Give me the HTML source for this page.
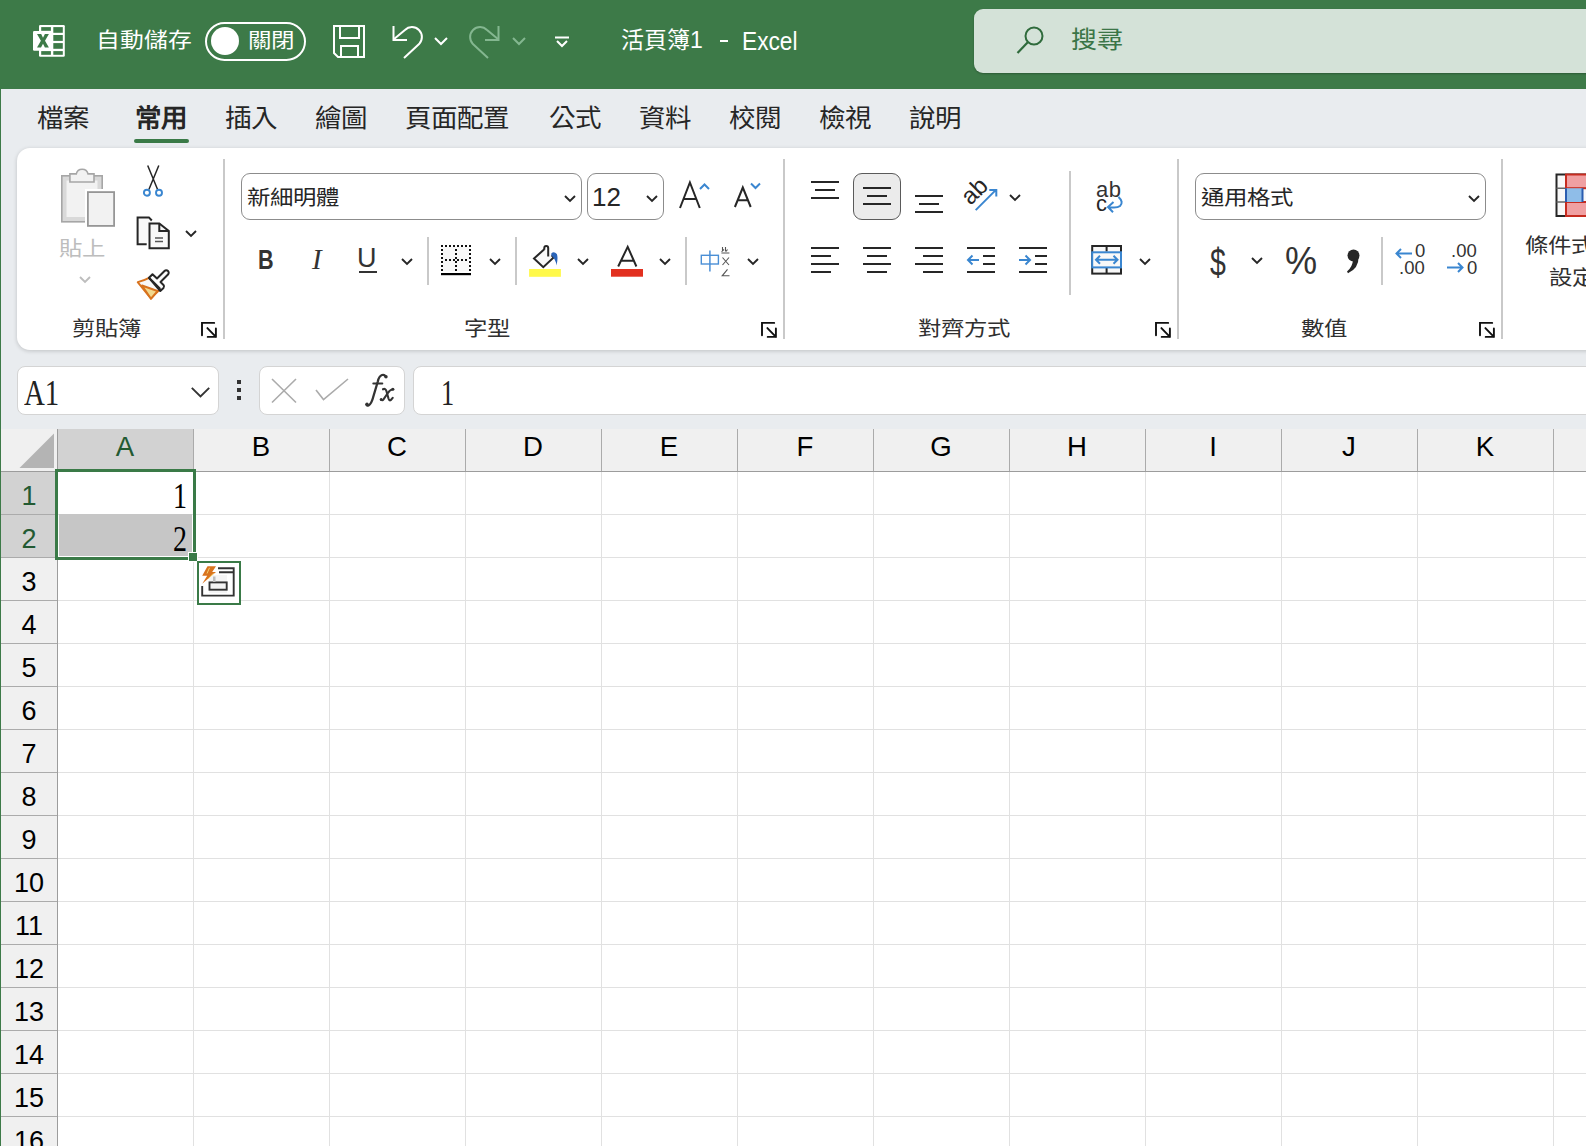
<!DOCTYPE html>
<html lang="zh-TW">
<head>
<meta charset="utf-8">
<style>
*{box-sizing:border-box;margin:0;padding:0}
html,body{width:1586px;height:1146px;overflow:hidden}
body{background:#E9ECEF;font-family:"Liberation Sans",sans-serif;position:relative;color:#222}
.a{position:absolute;white-space:nowrap}
svg.a{overflow:visible}
#title{left:0;top:0;width:1586px;height:89px;background:#3D7A48}
.wt{color:#fff}
#lb{left:0;top:89px;width:1px;height:1057px;background:#3D7A48}
.tab{top:102px;font-size:26.5px;line-height:34px;color:#262626;transform:scaleY(.95);transform-origin:0 0}
#panel{left:17px;top:148px;width:1600px;height:202px;background:#fff;border-radius:13px;box-shadow:0 1px 4px rgba(0,0,0,.18)}
.sep{background:#C9C9C9;width:2px}
.lbl{font-size:23.4px;line-height:30px;color:#303030;transform:scaleY(.88);transform-origin:0 0}
.cj{transform:scaleY(.88);transform-origin:0 0}
.box{border:1.6px solid #8C8C8C;border-radius:9px;background:#fff}
.fb{background:#fff;border:1px solid #D4D4D4;border-radius:8px}
</style>
</head>
<body>
<div id="title" class="a">
<svg class="a" style="left:28px;top:20px" width="42" height="42" viewBox="0 0 42 42">
<rect x="11" y="5" width="25.8" height="31.8" rx="1.2" fill="#fff"/>
<rect x="5" y="11" width="20" height="19.8" rx="1.2" fill="#fff"/>
<g fill="#3D7A48"><rect x="13.2" y="7.1" width="9.7" height="3.7"/><rect x="13.2" y="31.1" width="9.7" height="3.7"/>
<rect x="25.3" y="7.1" width="9.5" height="5.7"/><rect x="25.3" y="15" width="9.5" height="5.9"/><rect x="25.3" y="23.1" width="9.5" height="5.7"/><rect x="25.3" y="31.1" width="9.5" height="3.7"/>
<path d="M9 14.1H13.2L15 17.8L16.9 14.1H20.9L17 20.8L20.9 27.5H16.9L15 23.7L13 27.5H9L12.9 20.8Z"/></g>
</svg>
<div class="a wt cj" style="left:96px;top:25px;font-size:23.8px;line-height:34px">自動儲存</div>
<div class="a" style="left:205px;top:22px;width:101px;height:39px;border:2px solid #fff;border-radius:20px"></div>
<div class="a" style="left:211px;top:27px;width:28px;height:28px;border-radius:50%;background:#fff"></div>
<div class="a wt cj" style="left:248px;top:26px;font-size:23.5px;line-height:34px">關閉</div>
<svg class="a" style="left:332px;top:25px" width="34" height="34" viewBox="0 0 34 34">
<path d="M2 1H32V32H6L2 28Z M8 1V13H27V1 M9 32V21H26V32" fill="none" stroke="#fff" stroke-width="2"/>
</svg>
<svg class="a" style="left:390px;top:24px" width="34" height="36" viewBox="0 0 34 36">
<path d="M3.5 2V16H17" fill="none" stroke="#fff" stroke-width="2"/>
<path d="M3.8 15.2L14.93 5.93A10 10 0 0 1 29.07 20.07L14 34" fill="none" stroke="#fff" stroke-width="2"/>
</svg>
<svg class="a" style="left:433px;top:36px" width="16" height="12" viewBox="0 0 16 12"><path d="M2 2L8 8L14 2" fill="none" stroke="#fff" stroke-width="2"/></svg>
<svg class="a" style="left:468px;top:24px" width="34" height="36" viewBox="0 0 34 36">
<path d="M30.5 2V16H17" fill="none" stroke="#84B790" stroke-width="2"/>
<path d="M30.2 15.2L19.07 5.93A10 10 0 0 0 4.93 20.07L20 34" fill="none" stroke="#84B790" stroke-width="2"/>
</svg>
<svg class="a" style="left:511px;top:36px" width="16" height="12" viewBox="0 0 16 12"><path d="M2 2L8 8L14 2" fill="none" stroke="#84B790" stroke-width="2"/></svg>
<svg class="a" style="left:553px;top:34px" width="18" height="16" viewBox="0 0 18 16"><path d="M2 3.5H16M4 7L9 12L14 7" fill="none" stroke="#fff" stroke-width="2"/></svg>
<div class="a wt" style="left:621px;top:23px;font-size:23px;line-height:34px">活頁簿1</div><div class="a" style="left:720px;top:40px;width:8px;height:2px;background:#fff"></div><div class="a wt" style="left:742px;top:24px;font-size:25.5px;line-height:34px;transform:scaleX(.89);transform-origin:0 0">Excel</div>
<div class="a" style="left:974px;top:9px;width:640px;height:64px;background:#D4E2D8;border-radius:9px;box-shadow:0 1px 2px rgba(0,0,0,.25)"></div>
<svg class="a" style="left:1014px;top:24px" width="34" height="34" viewBox="0 0 34 34">
<circle cx="20" cy="12" r="8.5" fill="none" stroke="#2F6B3C" stroke-width="2"/>
<path d="M14 18L3.5 29" stroke="#2F6B3C" stroke-width="2.2"/>
</svg>
<div class="a cj" style="left:1071px;top:23px;font-size:26px;line-height:36px;color:#3B7547;transform:scaleY(.92)">搜尋</div>
</div>
<div id="lb" class="a"></div>
<div class="a tab" style="left:37px;">檔案</div>
<div class="a tab" style="left:135px;font-weight:bold;">常用</div>
<div class="a tab" style="left:225px;">插入</div>
<div class="a tab" style="left:315px;">繪圖</div>
<div class="a tab" style="left:405px;">頁面配置</div>
<div class="a tab" style="left:549px;">公式</div>
<div class="a tab" style="left:639px;">資料</div>
<div class="a tab" style="left:729px;">校閱</div>
<div class="a tab" style="left:819px;">檢視</div>
<div class="a tab" style="left:909px;">說明</div>
<div class="a" style="left:134px;top:139px;width:55px;height:4px;border-radius:2px;background:#3A7A47"></div>
<div id="panel" class="a"></div>
<svg class="a" style="left:55px;top:160px" width="70" height="70" viewBox="0 0 70 70">
<rect x="6.8" y="15.8" width="40.4" height="46" fill="#D9D9D9" stroke="#A6A6A6" stroke-width="1.6"/>
<rect x="11.5" y="20.5" width="31" height="36.5" fill="#F2F2F2"/>
<path d="M14.9 22V13.9H21.3A6 6 0 0 1 33 13.9H39V22Z" fill="#F2F2F2" stroke="#A6A6A6" stroke-width="1.6"/>
<rect x="30" y="29" width="32" height="40" fill="#fff"/>
<rect x="32.9" y="32.1" width="26.2" height="33.8" fill="#F2F2F2" stroke="#969696" stroke-width="1.8"/>
</svg>
<div class="a lbl" style="left:59px;top:236px;color:#BDBDBD">貼上</div>
<svg class="a" style="left:79px;top:276px" width="12" height="7" viewBox="0 0 12 7"><path d="M1 1L6.0 6L11 1" fill="none" stroke="#BDBDBD" stroke-width="1.9"/></svg>
<svg class="a" style="left:140px;top:163px" width="26" height="36" viewBox="0 0 26 36">
<path d="M7.7 2.5L17.6 26.5M18.8 2.5L8.9 26.5" fill="none" stroke="#262626" stroke-width="1.5"/>
<circle cx="6.9" cy="29.7" r="3" fill="#fff" stroke="#3A86D0" stroke-width="1.9"/>
<circle cx="19" cy="29.7" r="3" fill="#fff" stroke="#3A86D0" stroke-width="1.9"/>
</svg>
<svg class="a" style="left:135px;top:215px" width="36" height="36" viewBox="0 0 36 36">
<path d="M11.7 29.3H2.6V2.4H13.9L16.8 5.5" fill="#F8F8F8" stroke="#262626" stroke-width="2"/>
<path d="M14.5 8.5H24.3L33.8 15.9V33.2H14.5Z" fill="#F8F8F8" stroke="#262626" stroke-width="2"/>
<path d="M24.3 8.5V15.9H33.8" fill="none" stroke="#262626" stroke-width="2"/>
<path d="M20 22.9H28M20 26.6H28" stroke="#555" stroke-width="1.5"/>
</svg>
<svg class="a" style="left:185px;top:230px" width="12" height="7" viewBox="0 0 12 7"><path d="M1 1L6.0 6L11 1" fill="none" stroke="#262626" stroke-width="1.9"/></svg>
<svg class="a" style="left:136px;top:267px" width="36" height="36" viewBox="0 0 36 36">
<path d="M1.7 15.2Q8 13.5 13 10.8L24.3 22Q19 27 15 31.7Z" fill="#F8F8F8" stroke="#D8731E" stroke-width="1.9" stroke-linejoin="round"/>
<path d="M6 18.5L21.5 24L15 31.7Z" fill="#F2D98E" stroke="#D8731E" stroke-width="1.9" stroke-linejoin="round"/>
<path d="M13 10.8L16.5 7.3L21 11.5L28.5 4A2.2 2.2 0 0 1 32 7.5L24.5 15L27.5 18Q28.8 19.5 27.5 21L24.3 24Z" fill="#FBFBFB" stroke="#262626" stroke-width="2" stroke-linejoin="round"/>
<path d="M13 10.8L24.3 22" fill="none" stroke="#262626" stroke-width="2"/>
</svg>
<div class="a lbl" style="left:72px;top:316px">剪貼簿</div>
<svg class="a" style="left:201px;top:322px" width="16" height="16" viewBox="0 0 16 16"><path d="M1 13.2V0.9H13.2M6.4 6.1L14.9 14.9M14.9 6.4V14.9H6.7" fill="none" stroke="#111" stroke-width="1.9" stroke-linecap="round"/></svg>
<div class="a sep" style="left:223px;top:159px;height:180px"></div>
<div class="a box" style="left:241px;top:173px;width:341px;height:47px"></div>
<div class="a cj" style="left:247px;top:185px;font-size:23.4px;line-height:30px;color:#262626">新細明體</div>
<svg class="a" style="left:564px;top:195px" width="12" height="7" viewBox="0 0 12 7"><path d="M1 1L6.0 6L11 1" fill="none" stroke="#262626" stroke-width="1.9"/></svg>
<div class="a box" style="left:587px;top:173px;width:77px;height:47px"></div>
<div class="a" style="left:592px;top:182px;font-size:26px;line-height:30px;color:#262626">12</div>
<svg class="a" style="left:646px;top:195px" width="12" height="7" viewBox="0 0 12 7"><path d="M1 1L6.0 6L11 1" fill="none" stroke="#262626" stroke-width="1.9"/></svg>
<svg class="a" style="left:677px;top:180px" width="26" height="30" viewBox="0 0 26 30"><path d="M3 28L12.9 2.5L22.8 28M6.7 19H19.1" fill="none" stroke="#262626" stroke-width="2"/></svg>
<svg class="a" style="left:699px;top:183px" width="11" height="7" viewBox="0 0 11 7"><path d="M1 6L5.5 1.5L10 6" fill="none" stroke="#3A86D0" stroke-width="2"/></svg>
<svg class="a" style="left:732px;top:185px" width="22" height="24" viewBox="0 0 22 24"><path d="M2.9 22L10.8 2.5L18.7 22M5.8 15.3H15.8" fill="none" stroke="#262626" stroke-width="2"/></svg>
<svg class="a" style="left:750px;top:182px" width="11" height="7" viewBox="0 0 11 7"><path d="M1 1.5L5.5 6L10 1.5" fill="none" stroke="#3A86D0" stroke-width="2"/></svg>
<div class="a" style="left:258px;top:245px;font-size:27px;line-height:30px;font-weight:bold;color:#333;transform:scaleX(.8);transform-origin:0 0">B</div>
<div class="a" style="left:312px;top:244px;font-size:29px;line-height:30px;font-style:italic;font-family:'Liberation Serif';color:#333">I</div>
<div class="a" style="left:357px;top:243px;font-size:27px;line-height:30px;color:#333">U</div>
<div class="a" style="left:359px;top:271px;width:18px;height:2px;background:#333"></div>
<svg class="a" style="left:401px;top:258px" width="12" height="7" viewBox="0 0 12 7"><path d="M1 1L6.0 6L11 1" fill="none" stroke="#262626" stroke-width="1.9"/></svg>
<div class="a sep" style="left:427px;top:237px;height:48px"></div>
<svg class="a" style="left:438px;top:242px" width="36" height="36" viewBox="0 0 36 36"><rect x="5" y="5" width="26" height="24" fill="#F8F8F8"/><g fill="#111"><rect x="3" y="3" width="2" height="2"/><rect x="3" y="7" width="2" height="2"/><rect x="3" y="11" width="2" height="2"/><rect x="3" y="15" width="2" height="2"/><rect x="3" y="19" width="2" height="2"/><rect x="3" y="23" width="2" height="2"/><rect x="3" y="27" width="2" height="2"/><rect x="7" y="3" width="2" height="2"/><rect x="7" y="17" width="2" height="2"/><rect x="11" y="3" width="2" height="2"/><rect x="11" y="17" width="2" height="2"/><rect x="15" y="3" width="2" height="2"/><rect x="15" y="17" width="2" height="2"/><rect x="17" y="7" width="2" height="2"/><rect x="17" y="11" width="2" height="2"/><rect x="17" y="15" width="2" height="2"/><rect x="17" y="19" width="2" height="2"/><rect x="17" y="23" width="2" height="2"/><rect x="17" y="27" width="2" height="2"/><rect x="19" y="3" width="2" height="2"/><rect x="19" y="17" width="2" height="2"/><rect x="23" y="3" width="2" height="2"/><rect x="23" y="17" width="2" height="2"/><rect x="27" y="3" width="2" height="2"/><rect x="27" y="17" width="2" height="2"/><rect x="31" y="3" width="2" height="2"/><rect x="31" y="7" width="2" height="2"/><rect x="31" y="11" width="2" height="2"/><rect x="31" y="15" width="2" height="2"/><rect x="31" y="19" width="2" height="2"/><rect x="31" y="23" width="2" height="2"/><rect x="31" y="27" width="2" height="2"/></g><rect x="3" y="31" width="30" height="2.2" fill="#000"/></svg>
<svg class="a" style="left:489px;top:258px" width="12" height="7" viewBox="0 0 12 7"><path d="M1 1L6.0 6L11 1" fill="none" stroke="#262626" stroke-width="1.9"/></svg>
<div class="a sep" style="left:515px;top:237px;height:48px"></div>
<svg class="a" style="left:526px;top:240px" width="40" height="40" viewBox="0 0 40 40">
<path d="M18.3 9.3L8 18.5L17.3 27.2L27.6 17.4L22 12Z" fill="#F8F8F8"/>
<path d="M18.3 9.3L8 18.5L17.3 27.2L27.6 17.4L25.6 15.3" fill="none" stroke="#262626" stroke-width="2"/>
<path d="M18.3 9.8V7.9A1.95 1.95 0 0 1 22.2 7.9V16.6" fill="none" stroke="#262626" stroke-width="2"/>
<path d="M25.3 13.4Q28 11 30.8 14Q32.3 17 30.6 25.5Q29.8 19.5 25.3 15.2Z" fill="#2A64B8"/>
<rect x="3.1" y="29" width="31.8" height="7.8" fill="#FFF94A"/>
</svg>
<svg class="a" style="left:577px;top:258px" width="12" height="7" viewBox="0 0 12 7"><path d="M1 1L6.0 6L11 1" fill="none" stroke="#262626" stroke-width="1.9"/></svg>
<svg class="a" style="left:610px;top:240px" width="34" height="40" viewBox="0 0 34 40"><path d="M8.2 26.5L17.7 6.8L26.4 26.5M11.3 20.7H23.7" fill="none" stroke="#262626" stroke-width="2"/><rect x="1" y="29" width="32" height="7.7" fill="#E2301F"/></svg>
<svg class="a" style="left:659px;top:258px" width="12" height="7" viewBox="0 0 12 7"><path d="M1 1L6.0 6L11 1" fill="none" stroke="#262626" stroke-width="1.9"/></svg>
<div class="a sep" style="left:685px;top:237px;height:48px"></div>
<svg class="a" style="left:698px;top:244px" width="36" height="36" viewBox="0 0 36 36">
<rect x="3.3" y="11.3" width="17.1" height="8.7" fill="none" stroke="#4A8FD6" stroke-width="1.4"/>
<path d="M11.9 6.5V27.4" stroke="#4A8FD6" stroke-width="1.5"/>
<path d="M24.5 3V7.5M27.5 3V7.5M23.5 7.5L26 5.5M29.5 5.5L28 7.5M23.4 9H31.4" fill="none" stroke="#555" stroke-width="1.1"/>
<path d="M24.5 13.5L31 21M31 13.5L24.5 21" fill="none" stroke="#555" stroke-width="1.1"/>
<path d="M29.5 25.3L24.2 31.8H31.5" fill="none" stroke="#555" stroke-width="1.1"/>
</svg>
<svg class="a" style="left:747px;top:258px" width="12" height="7" viewBox="0 0 12 7"><path d="M1 1L6.0 6L11 1" fill="none" stroke="#262626" stroke-width="1.9"/></svg>
<div class="a lbl" style="left:464px;top:316px">字型</div>
<svg class="a" style="left:761px;top:322px" width="16" height="16" viewBox="0 0 16 16"><path d="M1 13.2V0.9H13.2M6.4 6.1L14.9 14.9M14.9 6.4V14.9H6.7" fill="none" stroke="#111" stroke-width="1.9" stroke-linecap="round"/></svg>
<div class="a sep" style="left:783px;top:159px;height:180px"></div>
<div class="a" style="left:811px;top:181px;width:28px;height:2px;background:#262626"></div>
<div class="a" style="left:815px;top:189px;width:20px;height:2px;background:#262626"></div>
<div class="a" style="left:811px;top:197px;width:28px;height:2px;background:#262626"></div>
<div class="a" style="left:853px;top:173px;width:48px;height:47px;border:1.6px solid #5A5A5A;border-radius:9px;background:#EBEBEB"></div>
<div class="a" style="left:863px;top:187px;width:28px;height:2px;background:#262626"></div>
<div class="a" style="left:867px;top:195px;width:20px;height:2px;background:#262626"></div>
<div class="a" style="left:863px;top:203px;width:28px;height:2px;background:#262626"></div>
<div class="a" style="left:915px;top:195px;width:28px;height:2px;background:#262626"></div>
<div class="a" style="left:919px;top:203px;width:20px;height:2px;background:#262626"></div>
<div class="a" style="left:915px;top:211px;width:28px;height:2px;background:#262626"></div>
<div class="a" style="left:961px;top:179px;font-size:24px;line-height:24px;color:#262626;transform:rotate(-45deg);transform-origin:50% 50%">ab</div>
<svg class="a" style="left:970px;top:184px" width="32" height="32" viewBox="0 0 32 32"><path d="M5.7 26.1L26.2 5.6M19.3 5.9H26.3V12.5" fill="none" stroke="#3A86D0" stroke-width="2"/></svg>
<svg class="a" style="left:1009px;top:194px" width="12" height="7" viewBox="0 0 12 7"><path d="M1 1L6.0 6L11 1" fill="none" stroke="#262626" stroke-width="1.9"/></svg>
<div class="a" style="left:811px;top:247px;width:28px;height:2px;background:#262626"></div>
<div class="a" style="left:811px;top:255px;width:20px;height:2px;background:#262626"></div>
<div class="a" style="left:811px;top:263px;width:28px;height:2px;background:#262626"></div>
<div class="a" style="left:811px;top:271px;width:20px;height:2px;background:#262626"></div>
<div class="a" style="left:863px;top:247px;width:28px;height:2px;background:#262626"></div>
<div class="a" style="left:867px;top:255px;width:20px;height:2px;background:#262626"></div>
<div class="a" style="left:863px;top:263px;width:28px;height:2px;background:#262626"></div>
<div class="a" style="left:867px;top:271px;width:20px;height:2px;background:#262626"></div>
<div class="a" style="left:915px;top:247px;width:28px;height:2px;background:#262626"></div>
<div class="a" style="left:923px;top:255px;width:20px;height:2px;background:#262626"></div>
<div class="a" style="left:915px;top:263px;width:28px;height:2px;background:#262626"></div>
<div class="a" style="left:923px;top:271px;width:20px;height:2px;background:#262626"></div>
<div class="a" style="left:967px;top:247px;width:28px;height:2px;background:#262626"></div>
<div class="a" style="left:983px;top:255px;width:12px;height:2px;background:#262626"></div>
<div class="a" style="left:983px;top:263px;width:12px;height:2px;background:#262626"></div>
<div class="a" style="left:967px;top:271px;width:28px;height:2px;background:#262626"></div>
<div class="a" style="left:1019px;top:247px;width:28px;height:2px;background:#262626"></div>
<div class="a" style="left:1035px;top:255px;width:12px;height:2px;background:#262626"></div>
<div class="a" style="left:1035px;top:263px;width:12px;height:2px;background:#262626"></div>
<div class="a" style="left:1019px;top:271px;width:28px;height:2px;background:#262626"></div>
<svg class="a" style="left:964px;top:252px" width="18" height="16" viewBox="0 0 18 16"><path d="M15 8H4M8.5 3.5L4 8L8.5 12.5" fill="none" stroke="#3A86D0" stroke-width="2"/></svg>
<svg class="a" style="left:1017px;top:252px" width="18" height="16" viewBox="0 0 18 16"><path d="M2 8H13M8.5 3.5L13 8L8.5 12.5" fill="none" stroke="#3A86D0" stroke-width="2"/></svg>
<div class="a sep" style="left:1069px;top:171px;height:124px"></div>
<div class="a" style="left:1096px;top:179px;font-size:22px;line-height:22px;color:#333;letter-spacing:.5px">ab</div>
<div class="a" style="left:1096px;top:193px;font-size:22px;line-height:22px;color:#262626">c</div>
<svg class="a" style="left:1104px;top:194px" width="22" height="22" viewBox="0 0 22 22"><path d="M14.5 3Q20 8 16 12Q13 14.5 4.5 13M9.5 8L4 13L9 18.2" fill="none" stroke="#3A86D0" stroke-width="2"/></svg>
<svg class="a" style="left:1088px;top:242px" width="36" height="36" viewBox="0 0 36 36">
<rect x="4.2" y="4" width="28.8" height="27.6" fill="#F8F8F8" stroke="#262626" stroke-width="2"/>
<path d="M18.6 4V9.5M18.6 25.5V31.6" stroke="#262626" stroke-width="2"/>
<rect x="4.2" y="10.3" width="28.8" height="15.1" fill="#F8F8F8" stroke="#3A86D0" stroke-width="2"/>
<path d="M8 17.8H29.5M12 13.8L8 17.8L12 21.8M25.5 13.8L29.5 17.8L25.5 21.8" fill="none" stroke="#3A86D0" stroke-width="2"/>
</svg>
<svg class="a" style="left:1139px;top:258px" width="12" height="7" viewBox="0 0 12 7"><path d="M1 1L6.0 6L11 1" fill="none" stroke="#262626" stroke-width="1.9"/></svg>
<div class="a lbl" style="left:918px;top:316px">對齊方式</div>
<svg class="a" style="left:1155px;top:322px" width="16" height="16" viewBox="0 0 16 16"><path d="M1 13.2V0.9H13.2M6.4 6.1L14.9 14.9M14.9 6.4V14.9H6.7" fill="none" stroke="#111" stroke-width="1.9" stroke-linecap="round"/></svg>
<div class="a sep" style="left:1177px;top:159px;height:180px"></div>
<div class="a box" style="left:1195px;top:173px;width:291px;height:47px"></div>
<div class="a cj" style="left:1201px;top:185px;font-size:23.4px;line-height:30px;color:#262626">通用格式</div>
<svg class="a" style="left:1468px;top:195px" width="12" height="7" viewBox="0 0 12 7"><path d="M1 1L6.0 6L11 1" fill="none" stroke="#262626" stroke-width="1.9"/></svg>
<div class="a" style="left:1210px;top:243px;font-size:38px;line-height:40px;color:#333;transform:scaleX(.75);transform-origin:0 0">$</div>
<svg class="a" style="left:1251px;top:257px" width="12" height="7" viewBox="0 0 12 7"><path d="M1 1L6.0 6L11 1" fill="none" stroke="#262626" stroke-width="1.9"/></svg>
<div class="a" style="left:1285px;top:242px;font-size:38px;line-height:38px;color:#333;transform:scaleX(.95);transform-origin:0 0">%</div>
<svg class="a" style="left:1342px;top:246px" width="24" height="30" viewBox="0 0 24 30"><circle cx="11.5" cy="9.5" r="6" fill="#262626"/><path d="M16.5 11Q17 22 6 27.3L5 25.5Q10.5 21 11 14Z" fill="#262626"/></svg>
<div class="a sep" style="left:1381px;top:237px;height:48px"></div>
<div class="a" style="left:1415px;top:240px;font-size:18.5px;line-height:22px;color:#333">0</div>
<div class="a" style="left:1399px;top:257px;font-size:18.5px;line-height:22px;color:#333">.00</div>
<svg class="a" style="left:1393px;top:246px" width="22" height="16" viewBox="0 0 22 16"><path d="M19 7.5H3.5M8 3L3.5 7.5L8 12" fill="none" stroke="#3A86D0" stroke-width="2"/></svg>
<div class="a" style="left:1451px;top:240px;font-size:18.5px;line-height:22px;color:#333">.00</div>
<div class="a" style="left:1467px;top:257px;font-size:18.5px;line-height:22px;color:#333">0</div>
<svg class="a" style="left:1445px;top:260px" width="22" height="16" viewBox="0 0 22 16"><path d="M2 7.5H17.5M13 3L17.5 7.5L13 12" fill="none" stroke="#3A86D0" stroke-width="2"/></svg>
<div class="a lbl" style="left:1301px;top:316px">數值</div>
<svg class="a" style="left:1479px;top:322px" width="16" height="16" viewBox="0 0 16 16"><path d="M1 13.2V0.9H13.2M6.4 6.1L14.9 14.9M14.9 6.4V14.9H6.7" fill="none" stroke="#111" stroke-width="1.9" stroke-linecap="round"/></svg>
<div class="a sep" style="left:1501px;top:159px;height:180px"></div>
<svg class="a" style="left:1555px;top:173px" width="40" height="44" viewBox="0 0 40 44">
<rect x="1.5" y="1.5" width="40" height="41.5" fill="#F8F8F8" stroke="#262626" stroke-width="2"/>
<path d="M1.5 15.2H11M1.5 29H11" stroke="#666" stroke-width="1.5"/>
<rect x="11" y="1.5" width="34" height="13.7" fill="#F0A0A2" stroke="#C62B1F" stroke-width="2"/>
<rect x="11" y="29" width="34" height="14" fill="#F0A0A2" stroke="#C62B1F" stroke-width="2"/>
<rect x="11" y="15.2" width="16.5" height="13.8" fill="#8FBDE8"/>
<path d="M11 15.2V29M27.5 15.2V29" stroke="#2A5DB0" stroke-width="2"/>
</svg>
<div class="a cj" style="left:1525px;top:233px;font-size:23.4px;line-height:30px;color:#303030">條件式</div>
<div class="a cj" style="left:1549px;top:265px;font-size:23.4px;line-height:30px;color:#303030">設定</div>
<div class="a fb" style="left:17px;top:366px;width:202px;height:49px"></div>
<div class="a" style="left:24px;top:373px;font-family:'Liberation Serif',serif;font-size:36px;line-height:40px;color:#222;transform:scaleX(.8);transform-origin:0 0">A1</div>
<svg class="a" style="left:189px;top:385px" width="23" height="15" viewBox="0 0 23 15"><path d="M2.8 2.8L11.5 11.5L20.2 2.8" fill="none" stroke="#333" stroke-width="1.9"/></svg>
<div class="a" style="left:237px;top:380px;width:4px;height:4px;background:#333"></div>
<div class="a" style="left:237px;top:388px;width:4px;height:4px;background:#333"></div>
<div class="a" style="left:237px;top:396px;width:4px;height:4px;background:#333"></div>
<div class="a fb" style="left:259px;top:366px;width:146px;height:49px"></div>
<svg class="a" style="left:270px;top:377px" width="28" height="28" viewBox="0 0 28 28"><path d="M2 2L26 25.5M26 2L2 25.5" fill="none" stroke="#ABABAB" stroke-width="1.6"/></svg>
<svg class="a" style="left:314px;top:377px" width="36" height="26" viewBox="0 0 36 26"><path d="M2 13L9.5 22.5L34 2" fill="none" stroke="#ABABAB" stroke-width="1.6"/></svg>
<svg class="a" style="left:355px;top:365px" width="50" height="50" viewBox="0 0 50 50">
<path d="M30.5 11.5Q29.5 9.3 27 10Q24 11 22.8 16.5L18.5 31Q16.5 39 13.5 40.5Q11.8 41 11.6 39.5" fill="none" stroke="#333" stroke-width="2.3" stroke-linecap="round"/>
<path d="M18.3 18.4H27.3" fill="none" stroke="#333" stroke-width="2" stroke-linecap="round"/>
<circle cx="31" cy="11.8" r="1.7" fill="#333"/><circle cx="12" cy="39.2" r="1.7" fill="#333"/>
<path d="M28 24.3Q30.5 23 31.4 26L33.5 33.5Q34.3 36 35.7 35.2L37.7 32.8" fill="none" stroke="#333" stroke-width="2.1" stroke-linecap="round"/>
<path d="M37.8 24.2Q35 24.5 32.5 28.5L28.5 34.3Q27.2 36 26.3 34.6" fill="none" stroke="#333" stroke-width="2.1" stroke-linecap="round"/>
<circle cx="37.9" cy="24.3" r="1.5" fill="#333"/><circle cx="26.2" cy="34.4" r="1.5" fill="#333"/>
</svg>
<div class="a fb" style="left:413px;top:366px;width:1200px;height:49px"></div>
<div class="a" style="left:440.5px;top:374px;font-family:'Liberation Serif',serif;font-size:35px;line-height:40px;color:#222;transform:scaleX(.75);transform-origin:0 0">1</div>
<div class="a" style="left:1px;top:429px;width:1585px;height:717px;background:#fff"></div>
<div class="a" style="left:1px;top:429px;width:1585px;height:42px;background:#F0F0F0"></div>
<div class="a" style="left:1px;top:471px;width:56px;height:675px;background:#F0F0F0"></div>
<div class="a" style="left:57px;top:429px;width:136px;height:42px;background:#D2D2D2"></div>
<div class="a" style="left:1px;top:471px;width:56px;height:86px;background:#D2D2D2"></div>
<svg class="a" style="left:0;top:429px" width="57" height="42"><path d="M54 4.5V39H19.5Z" fill="#B4B4B4"/></svg>
<div class="a" style="left:193px;top:471px;width:1px;height:675px;background:#E1E1E1"></div>
<div class="a" style="left:193px;top:429px;width:1px;height:42px;background:#ABABAB"></div>
<div class="a" style="left:329px;top:471px;width:1px;height:675px;background:#E1E1E1"></div>
<div class="a" style="left:329px;top:429px;width:1px;height:42px;background:#ABABAB"></div>
<div class="a" style="left:465px;top:471px;width:1px;height:675px;background:#E1E1E1"></div>
<div class="a" style="left:465px;top:429px;width:1px;height:42px;background:#ABABAB"></div>
<div class="a" style="left:601px;top:471px;width:1px;height:675px;background:#E1E1E1"></div>
<div class="a" style="left:601px;top:429px;width:1px;height:42px;background:#ABABAB"></div>
<div class="a" style="left:737px;top:471px;width:1px;height:675px;background:#E1E1E1"></div>
<div class="a" style="left:737px;top:429px;width:1px;height:42px;background:#ABABAB"></div>
<div class="a" style="left:873px;top:471px;width:1px;height:675px;background:#E1E1E1"></div>
<div class="a" style="left:873px;top:429px;width:1px;height:42px;background:#ABABAB"></div>
<div class="a" style="left:1009px;top:471px;width:1px;height:675px;background:#E1E1E1"></div>
<div class="a" style="left:1009px;top:429px;width:1px;height:42px;background:#ABABAB"></div>
<div class="a" style="left:1145px;top:471px;width:1px;height:675px;background:#E1E1E1"></div>
<div class="a" style="left:1145px;top:429px;width:1px;height:42px;background:#ABABAB"></div>
<div class="a" style="left:1281px;top:471px;width:1px;height:675px;background:#E1E1E1"></div>
<div class="a" style="left:1281px;top:429px;width:1px;height:42px;background:#ABABAB"></div>
<div class="a" style="left:1417px;top:471px;width:1px;height:675px;background:#E1E1E1"></div>
<div class="a" style="left:1417px;top:429px;width:1px;height:42px;background:#ABABAB"></div>
<div class="a" style="left:1553px;top:471px;width:1px;height:675px;background:#E1E1E1"></div>
<div class="a" style="left:1553px;top:429px;width:1px;height:42px;background:#ABABAB"></div>
<div class="a" style="left:1689px;top:471px;width:1px;height:675px;background:#E1E1E1"></div>
<div class="a" style="left:1689px;top:429px;width:1px;height:42px;background:#ABABAB"></div>
<div class="a" style="left:57px;top:514px;width:1529px;height:1px;background:#E1E1E1"></div>
<div class="a" style="left:1px;top:514px;width:56px;height:1px;background:#ABABAB"></div>
<div class="a" style="left:57px;top:557px;width:1529px;height:1px;background:#E1E1E1"></div>
<div class="a" style="left:1px;top:557px;width:56px;height:1px;background:#ABABAB"></div>
<div class="a" style="left:57px;top:600px;width:1529px;height:1px;background:#E1E1E1"></div>
<div class="a" style="left:1px;top:600px;width:56px;height:1px;background:#ABABAB"></div>
<div class="a" style="left:57px;top:643px;width:1529px;height:1px;background:#E1E1E1"></div>
<div class="a" style="left:1px;top:643px;width:56px;height:1px;background:#ABABAB"></div>
<div class="a" style="left:57px;top:686px;width:1529px;height:1px;background:#E1E1E1"></div>
<div class="a" style="left:1px;top:686px;width:56px;height:1px;background:#ABABAB"></div>
<div class="a" style="left:57px;top:729px;width:1529px;height:1px;background:#E1E1E1"></div>
<div class="a" style="left:1px;top:729px;width:56px;height:1px;background:#ABABAB"></div>
<div class="a" style="left:57px;top:772px;width:1529px;height:1px;background:#E1E1E1"></div>
<div class="a" style="left:1px;top:772px;width:56px;height:1px;background:#ABABAB"></div>
<div class="a" style="left:57px;top:815px;width:1529px;height:1px;background:#E1E1E1"></div>
<div class="a" style="left:1px;top:815px;width:56px;height:1px;background:#ABABAB"></div>
<div class="a" style="left:57px;top:858px;width:1529px;height:1px;background:#E1E1E1"></div>
<div class="a" style="left:1px;top:858px;width:56px;height:1px;background:#ABABAB"></div>
<div class="a" style="left:57px;top:901px;width:1529px;height:1px;background:#E1E1E1"></div>
<div class="a" style="left:1px;top:901px;width:56px;height:1px;background:#ABABAB"></div>
<div class="a" style="left:57px;top:944px;width:1529px;height:1px;background:#E1E1E1"></div>
<div class="a" style="left:1px;top:944px;width:56px;height:1px;background:#ABABAB"></div>
<div class="a" style="left:57px;top:987px;width:1529px;height:1px;background:#E1E1E1"></div>
<div class="a" style="left:1px;top:987px;width:56px;height:1px;background:#ABABAB"></div>
<div class="a" style="left:57px;top:1030px;width:1529px;height:1px;background:#E1E1E1"></div>
<div class="a" style="left:1px;top:1030px;width:56px;height:1px;background:#ABABAB"></div>
<div class="a" style="left:57px;top:1073px;width:1529px;height:1px;background:#E1E1E1"></div>
<div class="a" style="left:1px;top:1073px;width:56px;height:1px;background:#ABABAB"></div>
<div class="a" style="left:57px;top:1116px;width:1529px;height:1px;background:#E1E1E1"></div>
<div class="a" style="left:1px;top:1116px;width:56px;height:1px;background:#ABABAB"></div>
<div class="a" style="left:57px;top:1159px;width:1529px;height:1px;background:#E1E1E1"></div>
<div class="a" style="left:1px;top:1159px;width:56px;height:1px;background:#ABABAB"></div>
<div class="a" style="left:57px;top:429px;width:1px;height:717px;background:#9C9C9C"></div>
<div class="a" style="left:1px;top:471px;width:1585px;height:1px;background:#9C9C9C"></div>
<div class="a" style="left:57px;top:428.5px;width:136px;text-align:center;font-size:27.6px;line-height:36px;color:#235A32">A</div>
<div class="a" style="left:193px;top:428.5px;width:136px;text-align:center;font-size:27.6px;line-height:36px;color:#000">B</div>
<div class="a" style="left:329px;top:428.5px;width:136px;text-align:center;font-size:27.6px;line-height:36px;color:#000">C</div>
<div class="a" style="left:465px;top:428.5px;width:136px;text-align:center;font-size:27.6px;line-height:36px;color:#000">D</div>
<div class="a" style="left:601px;top:428.5px;width:136px;text-align:center;font-size:27.6px;line-height:36px;color:#000">E</div>
<div class="a" style="left:737px;top:428.5px;width:136px;text-align:center;font-size:27.6px;line-height:36px;color:#000">F</div>
<div class="a" style="left:873px;top:428.5px;width:136px;text-align:center;font-size:27.6px;line-height:36px;color:#000">G</div>
<div class="a" style="left:1009px;top:428.5px;width:136px;text-align:center;font-size:27.6px;line-height:36px;color:#000">H</div>
<div class="a" style="left:1145px;top:428.5px;width:136px;text-align:center;font-size:27.6px;line-height:36px;color:#000">I</div>
<div class="a" style="left:1281px;top:428.5px;width:136px;text-align:center;font-size:27.6px;line-height:36px;color:#000">J</div>
<div class="a" style="left:1417px;top:428.5px;width:136px;text-align:center;font-size:27.6px;line-height:36px;color:#000">K</div>
<div class="a" style="left:1553px;top:428.5px;width:136px;text-align:center;font-size:27.6px;line-height:36px;color:#000">L</div>
<div class="a" style="left:1px;top:478px;width:56px;text-align:center;font-size:27px;line-height:36px;color:#235A32">1</div>
<div class="a" style="left:1px;top:521px;width:56px;text-align:center;font-size:27px;line-height:36px;color:#235A32">2</div>
<div class="a" style="left:1px;top:564px;width:56px;text-align:center;font-size:27px;line-height:36px;color:#000">3</div>
<div class="a" style="left:1px;top:607px;width:56px;text-align:center;font-size:27px;line-height:36px;color:#000">4</div>
<div class="a" style="left:1px;top:650px;width:56px;text-align:center;font-size:27px;line-height:36px;color:#000">5</div>
<div class="a" style="left:1px;top:693px;width:56px;text-align:center;font-size:27px;line-height:36px;color:#000">6</div>
<div class="a" style="left:1px;top:736px;width:56px;text-align:center;font-size:27px;line-height:36px;color:#000">7</div>
<div class="a" style="left:1px;top:779px;width:56px;text-align:center;font-size:27px;line-height:36px;color:#000">8</div>
<div class="a" style="left:1px;top:822px;width:56px;text-align:center;font-size:27px;line-height:36px;color:#000">9</div>
<div class="a" style="left:1px;top:865px;width:56px;text-align:center;font-size:27px;line-height:36px;color:#000">10</div>
<div class="a" style="left:1px;top:908px;width:56px;text-align:center;font-size:27px;line-height:36px;color:#000">11</div>
<div class="a" style="left:1px;top:951px;width:56px;text-align:center;font-size:27px;line-height:36px;color:#000">12</div>
<div class="a" style="left:1px;top:994px;width:56px;text-align:center;font-size:27px;line-height:36px;color:#000">13</div>
<div class="a" style="left:1px;top:1037px;width:56px;text-align:center;font-size:27px;line-height:36px;color:#000">14</div>
<div class="a" style="left:1px;top:1080px;width:56px;text-align:center;font-size:27px;line-height:36px;color:#000">15</div>
<div class="a" style="left:1px;top:1123px;width:56px;text-align:center;font-size:27px;line-height:36px;color:#000">16</div>
<div class="a" style="left:59px;top:514px;width:133px;height:42px;background:#C6C6C6"></div>
<div class="a" style="left:55px;top:469px;width:141px;height:91px;border:3px solid #3A7A47"></div>
<div class="a" style="left:188px;top:552px;width:10px;height:10px;background:#fff"></div>
<div class="a" style="left:189px;top:553px;width:8px;height:8px;background:#3A7A47"></div>
<div class="a" style="left:87px;top:477px;width:100px;text-align:right;font-family:'Liberation Serif',serif;font-size:35px;line-height:40px;color:#000;transform:scaleX(.8);transform-origin:100% 0">1</div>
<div class="a" style="left:87px;top:520px;width:100px;text-align:right;font-family:'Liberation Serif',serif;font-size:35px;line-height:40px;color:#000;transform:scaleX(.8);transform-origin:100% 0">2</div>
<div class="a" style="left:197px;top:561px;width:44px;height:44px;border:2px solid #3A7A47;background:#fff"></div>
<svg class="a" style="left:197px;top:561px" width="44" height="44" viewBox="0 0 44 44">
<rect x="12" y="14" width="18" height="18" fill="#F4F4F4"/>
<path d="M5.2 24.9V34.6H36.7V7.3H21M22 11.2H36.7" fill="none" stroke="#333" stroke-width="1.9"/>
<rect x="12.5" y="21.4" width="17.2" height="7.3" fill="none" stroke="#333" stroke-width="1.9"/>
<path d="M16 15.5H18.5V21H16Z" fill="#BDBDBD"/>
<path d="M10.5 5.2H19L15.2 10.9H19L5.2 22.8L10.2 14.7H5.2Z" fill="#D9731E"/>
<path d="M12.5 6.8L10 12.5M16.5 12.3L11 18" fill="none" stroke="#F2CF6E" stroke-width="1"/>
</svg>
</body>
</html>
